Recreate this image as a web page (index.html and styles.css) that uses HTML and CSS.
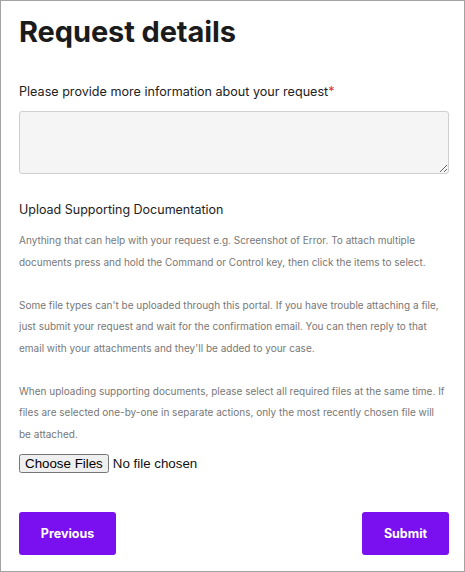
FILE: index.html
```html
<!DOCTYPE html>
<html lang="en">
<head>
<meta charset="utf-8">
<title>Request details</title>
<link rel="stylesheet" href="styles.css">
</head>
<body>
<div class="page">
  <h1 class="title">Request details</h1>
  <form class="form">
    <label class="label" for="info">Please provide more information about your request<span class="req">*</span></label>
    <textarea id="info" class="textarea"></textarea>

    <h2 class="upload-title">Upload Supporting Documentation</h2>
    <div class="help">
      <p>Anything that can help with your request e.g. Screenshot of Error. To attach multiple documents press and hold the Command or Control key, then click the items to select.</p>
      <p>Some file types can't be uploaded through this portal. If you have trouble attaching a file, just submit your request and wait for the confirmation email. You can then reply to that email with your attachments and they'll be added to your case.</p>
      <p>When uploading supporting documents, please select all required files at the same time. If files are selected one-by-one in separate actions, only the most recently chosen file will be attached.</p>
    </div>
    <input class="file" type="file" multiple>

    <div class="actions">
      <button type="button" class="btn btn-prev">Previous</button>
      <button type="button" class="btn btn-submit">Submit</button>
    </div>
  </form>
</div>
</body>
</html>
```
FILE: styles.css
```css
html, body {
  margin: 0;
  padding: 0;
  background: #fff;
}
body {
  font-family: Inter, "Noto Sans", sans-serif;
  color: #1a1a1a;
}
.page {
  box-sizing: border-box;
  width: 465px;
  height: 572px;
  border: 1px solid #a3a3a3;
  padding: 0 15px 0 18px;
}
.title {
  margin: 12px 0 0;
  font-size: 29px;
  line-height: 38px;
  font-weight: 700;
  color: #1b1b1b;
  letter-spacing: -0.1px;
}
.form {
  display: flex;
  flex-direction: column;
}
.label {
  margin-top: 31px;
  font-size: 12.6px;
  line-height: 20px;
  color: #222;
}
.req {
  color: #e0263a;
}
.textarea {
  box-sizing: border-box;
  margin-top: 9px;
  width: 430px;
  height: 63px;
  background: #f5f5f5;
  border: 1px solid #cfcfcf;
  border-radius: 3px;
  resize: vertical;
}
.upload-title {
  margin: 26px 0 0;
  font-size: 12.5px;
  line-height: 20px;
  font-weight: 400;
  color: #222;
}
.help {
  margin-top: 10px;
  padding-right: 3px;
  font-size: 10px;
  line-height: 21.5px;
  color: #777;
}
.help p {
  margin: 0 0 21.5px;
}
.help p:last-child {
  margin-bottom: 0;
}
.file {
  margin-top: 9px;
  font-family: "Liberation Sans", Arial, sans-serif;
  font-size: 13.33px;
  color: #111;
}
.file::file-selector-button {
  padding: 0 4px;
  margin-right: 4px;
}
.actions {
  display: flex;
  justify-content: space-between;
  margin-top: 39px;
  width: 430px;
}
.btn {
  height: 43px;
  border: none;
  border-radius: 3px;
  background: #7a10ef;
  color: #fff;
  font-family: Inter, "Noto Sans", sans-serif;
  font-size: 12.5px;
  font-weight: 700;
  cursor: pointer;
}
.btn-prev {
  width: 97px;
}
.btn-submit {
  width: 87px;
}
```
